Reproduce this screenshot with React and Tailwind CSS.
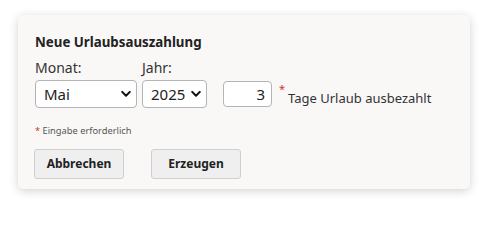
import React from 'react';

function Chevron() {
  return (
    <svg className="pointer-events-none absolute right-[6px] top-1/2 -translate-y-1/2" width="10" height="7" viewBox="0 0 10 7">
      <path d="M1.2 1.4 L5 5.2 L8.8 1.4" fill="none" stroke="#111" strokeWidth="2" strokeLinecap="round" strokeLinejoin="round" />
    </svg>
  );
}

function Dropdown({ value, width, options }) {
  return (
    <div className={`relative ${width}`}>
      <select
        defaultValue={value}
        className="h-[28px] w-full appearance-none rounded-[4px] border border-[#b4b4b4] bg-white pl-[8px] text-[15px] text-[#222] outline-none"
      >
        {options.map((o) => (
          <option key={o}>{o}</option>
        ))}
      </select>
      <Chevron />
    </div>
  );
}

export default function App() {
  return (
    <div className="h-[209px] w-[488px] bg-white pl-[18px] pt-[15px] font-['Segoe_UI','Noto_Sans',sans-serif]">
      {/* Karte */}
      <div className="h-[174px] w-[452px] rounded-[5px] bg-[#f9f8f7] pl-[17px] pt-[17px] shadow-[0_2px_10px_rgba(0,0,0,0.18)]">
        <h2 className="text-[13.3px] font-bold leading-[20px] text-[#222]">Neue Urlaubsauszahlung</h2>

        <div className="mt-[7px] flex items-end">
          <div className="flex flex-col">
            <label className="text-[14px] leading-[18px] text-[#333]">Monat:</label>
            <div className="mt-[3px]">
              <Dropdown value="Mai" width="w-[102px]" options={['Januar', 'Februar', 'März', 'April', 'Mai', 'Juni', 'Juli', 'August', 'September', 'Oktober', 'November', 'Dezember']} />
            </div>
          </div>
          <div className="ml-[5px] flex flex-col">
            <label className="text-[14px] leading-[18px] text-[#333]">Jahr:</label>
            <div className="mt-[3px]">
              <Dropdown value="2025" width="w-[65px]" options={['2024', '2025', '2026']} />
            </div>
          </div>
          <input
            type="text"
            defaultValue="3"
            className="ml-[16px] mb-[1px] h-[26px] w-[49px] rounded-[4px] border border-[#b4b4b4] bg-white pr-[6px] text-right text-[15px] text-[#222] outline-none"
          />
          <div className="ml-[7px] flex items-start pb-[1px]">
            <span className="-mt-[6px] text-[11px] leading-none text-[#d0342c]">*</span>
            <span className="ml-[3px] text-[13px] leading-[18px] text-[#333]">Tage Urlaub ausbezahlt</span>
          </div>
        </div>

        <p className="mt-[17px] text-[9.3px] leading-[12px] text-[#555]">
          <span className="text-[#d0342c]">*</span> Eingabe erforderlich
        </p>

        <div className="mt-[12px] flex gap-[27px]">
          <button className="-ml-[1px] h-[30px] w-[90px] rounded-[3px] border border-[#cfcfcf] bg-[#efefef] text-[12px] font-bold text-[#222]">
            Abbrechen
          </button>
          <button className="h-[30px] w-[90px] rounded-[3px] border border-[#cfcfcf] bg-[#efefef] text-[12px] font-bold text-[#222]">
            Erzeugen
          </button>
        </div>
      </div>
    </div>
  );
}
